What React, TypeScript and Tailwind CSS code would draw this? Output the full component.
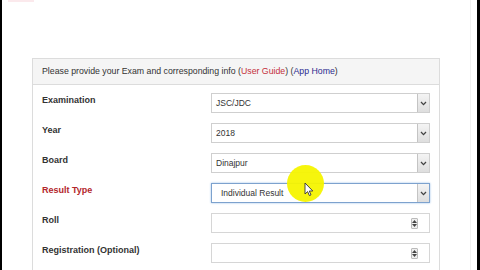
import React from "react";

const font = { fontFamily: '"Liberation Sans", Arial, sans-serif' };

function SelectBox({ value, focused }: { value: string; focused?: boolean }) {
  return (
    <div
      className={`relative flex h-[20px] w-[219px] items-center border bg-white ${
        focused ? "border-[#7da2ce] shadow-[0_0_2px_#9cc0e8]" : "border-[#cfcfcf]"
      }`}
    >
      <span className={`${focused ? "pl-[9px]" : "pl-[4px]"} text-[8.5px] text-[#333]`}>{value}</span>
      <div className="absolute right-0 top-0 flex h-full w-[12px] items-center justify-center border-l border-[#c4c4c4] bg-gradient-to-b from-[#f4f4f4] to-[#dedede]">
        <svg width="7" height="5" viewBox="0 0 7 5">
          <path d="M1 1 L3.5 3.6 L6 1" fill="none" stroke="#444" strokeWidth="1.3" />
        </svg>
      </div>
    </div>
  );
}

function NumberBox() {
  return (
    <div className="relative flex h-[20px] w-[219px] items-center border border-[#d6d6d6] bg-white">
      <div className="absolute right-[11px] top-[4px] flex h-[11px] w-[7px] flex-col items-center justify-center gap-[1px] rounded-[1px] border border-[#bbb] bg-[#eee]">
        <svg width="5" height="3" viewBox="0 0 5 3">
          <path d="M0 3 L2.5 0 L5 3 Z" fill="#444" />
        </svg>
        <svg width="5" height="3" viewBox="0 0 5 3">
          <path d="M0 0 L2.5 3 L5 0 Z" fill="#444" />
        </svg>
      </div>
    </div>
  );
}

function Row({ label, red, children }: { label: string; red?: boolean; children: React.ReactNode }) {
  return (
    <div className="flex items-start">
      <div
        className={`w-[169px] pt-[1px] text-[9px] font-bold ${red ? "text-[#b3262c]" : "text-[#333]"}`}
      >
        {label}
      </div>
      {children}
    </div>
  );
}

export default function App() {
  return (
    <div className="flex h-[270px] w-[480px] overflow-hidden bg-black" style={font}>
      <div className="w-[2px]" />
      <div className="relative flex-1 bg-white">
        <div className="ml-[6px] h-[2px] w-[26px] bg-[#fbe9ec]" />
        <div className="ml-[30px] mt-[56px] w-[408px] border border-[#dcdcdc]">
          <div className="flex h-[26px] items-center border-b border-[#dcdcdc] bg-[#f5f5f5] px-[9px] text-[8.75px] text-[#333]">
            <span>Please provide your Exam and corresponding info (</span>
            <span className="text-[#c4303c]">User Guide</span>
            <span>) (</span>
            <span className="text-[#2b2a8f]">App Home</span>
            <span>)</span>
          </div>
          <div className="flex flex-col gap-[10px] px-[9px] pb-[8px] pt-[8px]">
            <Row label="Examination">
              <SelectBox value="JSC/JDC" />
            </Row>
            <Row label="Year">
              <SelectBox value="2018" />
            </Row>
            <Row label="Board">
              <SelectBox value="Dinajpur" />
            </Row>
            <Row label="Result Type" red>
              <SelectBox value="Individual Result" focused />
            </Row>
            <Row label="Roll">
              <NumberBox />
            </Row>
            <Row label="Registration (Optional)">
              <NumberBox />
            </Row>
          </div>
        </div>
        <div className="absolute right-[6px] top-0 h-full w-px bg-[#f0f0f0]" />
        <div className="pointer-events-none absolute left-[285px] top-[165px] h-[37px] w-[37px] rounded-full bg-[#f6f400] opacity-95" />
        <svg
          className="absolute left-[302px] top-[182px]"
          width="10"
          height="15"
          viewBox="0 0 10 15"
        >
          <path
            d="M1 1 L1 12 L3.6 9.6 L5.4 13.6 L7 12.9 L5.3 9 L8.8 9 Z"
            fill="#fff"
            stroke="#333"
            strokeWidth="0.9"
            strokeLinejoin="round"
          />
        </svg>
      </div>
      <div className="w-[3px]" />
    </div>
  );
}
